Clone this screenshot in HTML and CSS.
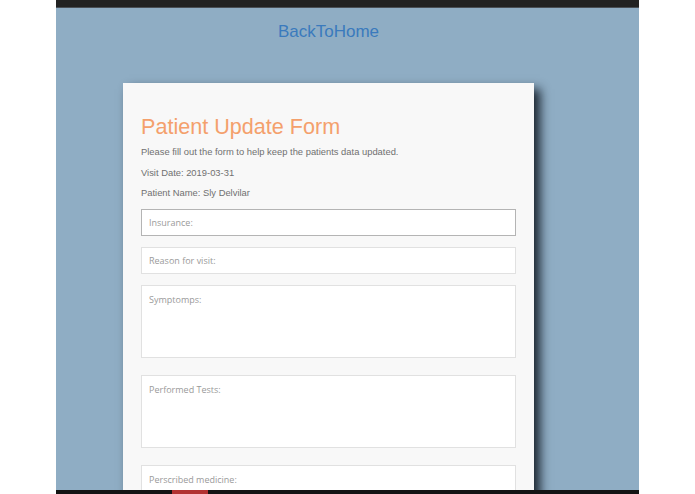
FILE: index.html
```html
<!DOCTYPE html>
<html>
<head>
<meta charset="utf-8">
<title>Patient Update Form</title>
<link rel="stylesheet" href="styles.css">
</head>
<body>
<div class="page">
  <div class="topbar"></div>
  <div class="main">
    <div class="wrap">
      <a class="home" href="#">BackToHome</a>
      <form class="card">
        <h1 class="title">Patient Update Form</h1>
        <p class="info">Please fill out the form to help keep the patients data updated.</p>
        <p class="info">Visit Date: 2019-03-31</p>
        <p class="info">Patient Name: Sly Delvilar</p>
        <div class="fields">
          <input class="field focused" type="text" placeholder="Insurance:">
          <input class="field" type="text" placeholder="Reason for visit:">
          <textarea class="field area" placeholder="Symptomps:"></textarea>
          <textarea class="field area" placeholder="Performed Tests:"></textarea>
          <textarea class="field area" placeholder="Perscribed medicine:"></textarea>
        </div>
      </form>
    </div>
  </div>
  <div class="bottombar"><span class="red"></span></div>
</div>
</body>
</html>
```

FILE: styles.css
```css
html, body {
  margin: 0;
  padding: 0;
  background: #ffffff;
  height: 100%;
  overflow: hidden;
}
.page {
  width: 583px;
  margin: 0 auto;
  height: 494px;
  display: flex;
  flex-direction: column;
  position: relative;
  background: #8fadc4;
}
.topbar {
  height: 7px;
  background: #222222;
  border-bottom: 1px solid #4a4f55;
  flex: none;
}
.main {
  flex: 1;
  background: #8fadc4;
  overflow: hidden;
}
.wrap {
  width: 411px;
  margin-left: 67px;
  padding-top: 14px;
}
.home {
  display: block;
  text-align: center;
  font-family: "Liberation Sans", Arial, sans-serif;
  font-size: 17px;
  line-height: 20px;
  color: #3a7abd;
  text-decoration: none;
}
.card {
  margin-top: 41px;
  background: #f8f8f8;
  padding: 31px 18px 40px 18px;
  box-shadow: 6px 6px 10px rgba(5, 12, 20, 0.85);
}
.title {
  margin: 0 0 2px 0;
  font-family: "Liberation Sans", Arial, sans-serif;
  font-weight: normal;
  font-size: 21.6px;
  line-height: 26px;
  color: #f4a06c;
}
.info {
  margin: 0;
  font-family: "Liberation Sans", Arial, sans-serif;
  font-size: 9.4px;
  line-height: 20.5px;
  color: #707070;
}
.fields {
  margin-top: 5px;
  display: flex;
  flex-direction: column;
}
.field {
  display: block;
  box-sizing: border-box;
  width: 375px;
  height: 27px;
  margin: 0 0 11px 0;
  padding: 0 7px;
  border: 1px solid #e1e1e1;
  background: #ffffff;
  font-family: "Open Sans", sans-serif;
  font-size: 9px;
  color: #555;
  outline: none;
}
.field.focused {
  border-color: #b4b4b4;
}
.field::placeholder {
  color: #9a9a9a;
  opacity: 1;
}
.area {
  height: 73px;
  padding: 8px 7px;
  line-height: 12px;
  resize: none;
  margin-bottom: 17px;
}
.bottombar {
  position: absolute;
  left: 0;
  right: 0;
  bottom: 0;
  height: 4px;
  background: #141414;
}
.red {
  position: absolute;
  left: 116px;
  top: 0;
  width: 36px;
  height: 4px;
  background: #b23232;
}
```
